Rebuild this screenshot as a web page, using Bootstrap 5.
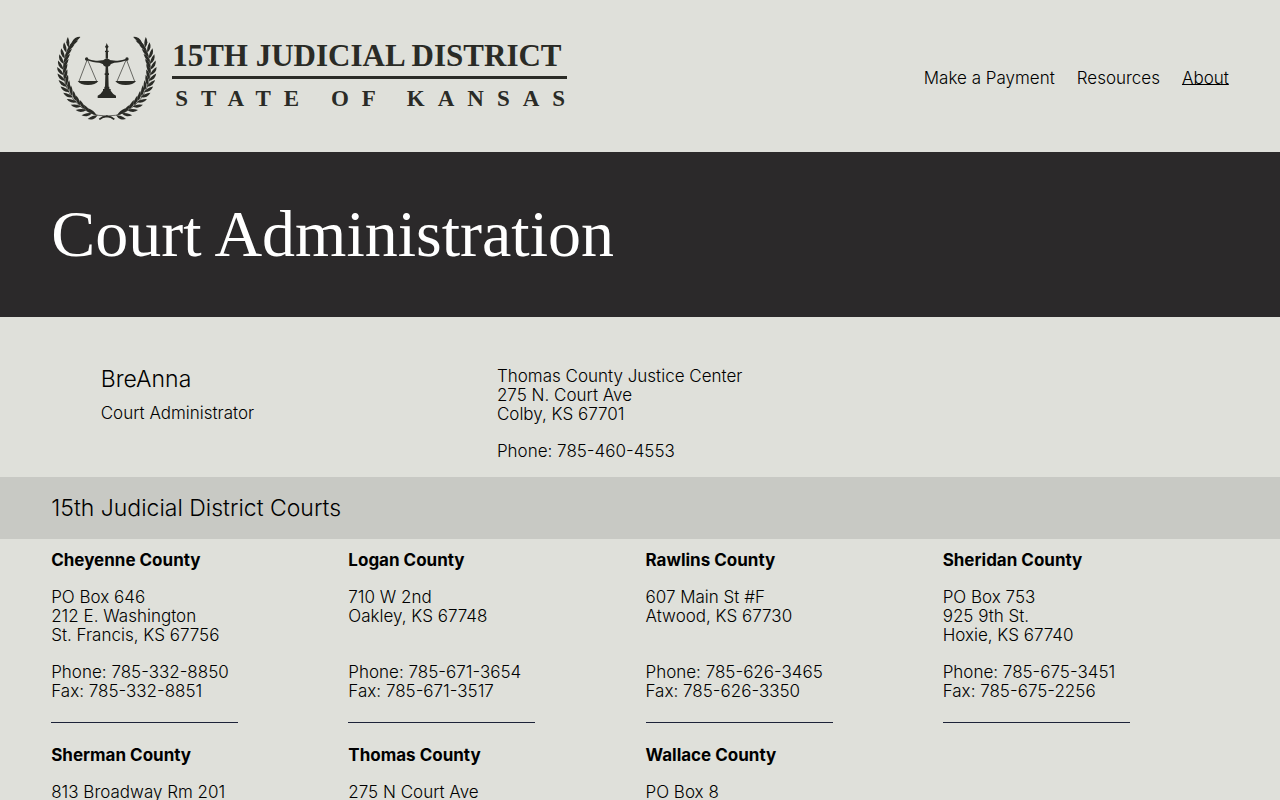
<!DOCTYPE html>
<html lang="en">
<head>
<meta charset="utf-8">
<meta name="viewport" content="width=device-width, initial-scale=1">
<title>Court Administration — 15th Judicial District</title>
<link href="https://cdn.jsdelivr.net/npm/bootstrap@5.3.0/dist/css/bootstrap.min.css" rel="stylesheet">
<style>
  body { background: #dfe0da; color: #000; font-family: Inter, "Liberation Sans", sans-serif; font-weight: 300; font-size: 17px; line-height: 19px; }
  .edge { padding-left: 4vw; padding-right: 4vw; }
  .site-header { min-height: 152px; padding-top: 3px; }
  .brand { color: #2a2b26; gap: 15px; padding-left: 6px; font-family: "Liberation Serif", serif; font-weight: 700; }
  .brand-name { font-size: 31px; line-height: 40px; border-bottom: 3px solid #2a2b26; padding-right: 5px; }
  .brand-state { font-size: 23px; line-height: 40px; letter-spacing: 13px; padding-left: 3px; margin-right: -13px; }
  .site-nav { gap: 22px; }
  .site-nav .nav-link { padding: 0; color: #000; line-height: 24px; }
  .site-nav .active { text-decoration: underline; text-decoration-thickness: 1px; text-underline-offset: 0; text-decoration-skip-ink: none; }
  .hero { background: #2b292a; color: #fff; padding-top: 48px; padding-bottom: 49px; }
  .hero h1 { font-family: "Liberation Serif", serif; font-weight: 400; font-size: 66px; line-height: 68px; }
  .contact-grid { display: grid; grid-template-columns: repeat(24, 1fr); column-gap: 11px; padding-top: 50px; padding-bottom: 16px; }
  .contact-who { grid-column: 2 / span 8; }
  .contact-where { grid-column: 10 / span 12; }
  .section-title { font-size: 23px; line-height: 24px; font-weight: 300; }
  .person { margin-bottom: 13px; }
  .band { background: #c8c9c4; padding-top: 19px; padding-bottom: 19px; }
  .counties { --bs-gutter-x: 11px; padding-top: 12px; row-gap: 23px; }
  .counties h3 { font-size: 17px; line-height: 19px; font-weight: 700; }
  .gap-line { margin-bottom: 18px; }
  .street { min-height: 57px; }
  .rule { width: 187px; margin: 21px 0 0; border-color: #1c2238; opacity: 1; }
</style>
</head>
<body>
<header class="site-header edge d-flex flex-wrap align-items-center justify-content-between">
  <a href="#" class="brand d-flex align-items-center text-decoration-none">
    <svg width="100" height="87" viewBox="36 42 300 261" fill="currentColor" role="img" aria-label="Scales of justice in a laurel wreath">
      <defs>
        <path id="leaf" d="M0 0Q7 -6 17 -6Q26 -5 32 0Q23 3 15 3Q6 3 0 0Z"/>
        <g id="pair"><use href="#leaf" transform="rotate(-30)"/><use href="#leaf" transform="translate(4 0) rotate(30)"/></g>
        <g id="branch">
          <path d="M207 297Q195 287 160 286C105 275 55 220 55 150C55 115 68 80 92 55" fill="none" stroke="currentColor" stroke-width="2"/>
          <path d="M163 298Q174 288 188 289" fill="none" stroke="currentColor" stroke-width="5"/>
          <use href="#pair" transform="translate(158 286) rotate(-170)"/>
          <use href="#pair" transform="translate(141 280) rotate(-160)"/>
          <use href="#pair" transform="translate(124 270) rotate(-150)"/>
          <use href="#pair" transform="translate(109 259) rotate(-142)"/>
          <use href="#pair" transform="translate(96 246) rotate(-134)"/>
          <use href="#pair" transform="translate(84 231) rotate(-127)"/>
          <use href="#pair" transform="translate(74 216) rotate(-119)"/>
          <use href="#pair" transform="translate(66 200) rotate(-112)"/>
          <use href="#pair" transform="translate(60 183) rotate(-105)"/>
          <use href="#pair" transform="translate(56 166) rotate(-98)"/>
          <use href="#pair" transform="translate(55 149) rotate(-90)"/>
          <use href="#pair" transform="translate(56 132) rotate(-84)"/>
          <use href="#pair" transform="translate(59 115) rotate(-79)"/>
          <use href="#pair" transform="translate(64 98) rotate(-72)"/>
          <use href="#pair" transform="translate(71 83) rotate(-64)"/>
          <use href="#leaf" transform="translate(80 69) rotate(-35)"/>
        </g>
        <g id="pan">
          <path d="M127 118L102 184M127 118L155 184" fill="none" stroke="currentColor" stroke-width="2"/>
          <path d="M98 183H160Q152 195 129 195Q106 195 98 183Z"/>
          <circle cx="125" cy="117" r="5"/>
          <path d="M122 115Q145 124 158 122Q170 120 185 120V136Q172 132 163 128Q145 128 122 119Z"/>
        </g>
      </defs>
      <use href="#branch"/>
      <use href="#branch" transform="matrix(-1 0 0 1 371 0)"/>
      <use href="#pan"/>
      <use href="#pan" transform="matrix(-1 0 0 1 371 0)"/>
      <circle cx="185.500" cy="128" r="12"/>
      <path d="M185 69L188 76L191 80L188 85V92H191V96H189V116H182V96H180V92H183V85L180 80L183 76Z"/>
      <path d="M182 138H189L190 160H192V165H190L191 200H193V207H197V212Q203 222 213 227V234H158V227Q168 222 174 212V207H178V200H180L181 165H179V160H181Z"/>
    </svg>
    <span class="d-flex flex-column">
      <span class="brand-name">15TH JUDICIAL DISTRICT</span>
      <span class="brand-state">STATE OF KANSAS</span>
    </span>
  </a>
  <nav class="site-nav nav" aria-label="Main">
    <a class="nav-link" href="#">Make a Payment</a>
    <a class="nav-link" href="#">Resources</a>
    <a class="nav-link active" aria-current="page" href="#">About</a>
  </nav>
</header>
<main>
  <section class="hero edge"><h1 class="mb-0">Court Administration</h1></section>
  <section class="contact-grid edge">
    <div class="contact-who">
      <h2 class="section-title person">BreAnna</h2>
      <p class="mb-0">Court Administrator</p>
    </div>
    <div class="contact-where">
      <p class="gap-line">Thomas County Justice Center<br>275 N. Court Ave<br>Colby, KS 67701</p>
      <p class="mb-0">Phone: 785-460-4553</p>
    </div>
  </section>
  <section>
    <div class="band edge"><h2 class="section-title mb-0">15th Judicial District Courts</h2></div>
    <div class="edge">
      <div class="row row-cols-4 counties">
        <article class="col"><h3 class="gap-line">Cheyenne County</h3><p class="gap-line street">PO Box 646<br>212 E. Washington<br>St. Francis, KS 67756</p><p class="mb-0">Phone: 785-332-8850<br>Fax: 785-332-8851</p><hr class="rule"></article>
        <article class="col"><h3 class="gap-line">Logan County</h3><p class="gap-line street">710 W 2nd<br>Oakley, KS 67748</p><p class="mb-0">Phone: 785-671-3654<br>Fax: 785-671-3517</p><hr class="rule"></article>
        <article class="col"><h3 class="gap-line">Rawlins County</h3><p class="gap-line street">607 Main St #F<br>Atwood, KS 67730</p><p class="mb-0">Phone: 785-626-3465<br>Fax: 785-626-3350</p><hr class="rule"></article>
        <article class="col"><h3 class="gap-line">Sheridan County</h3><p class="gap-line street">PO Box 753<br>925 9th St.<br>Hoxie, KS 67740</p><p class="mb-0">Phone: 785-675-3451<br>Fax: 785-675-2256</p><hr class="rule"></article>
        <article class="col"><h3 class="gap-line">Sherman County</h3><p class="gap-line street">813 Broadway Rm 201</p></article>
        <article class="col"><h3 class="gap-line">Thomas County</h3><p class="gap-line street">275 N Court Ave</p></article>
        <article class="col"><h3 class="gap-line">Wallace County</h3><p class="gap-line street">PO Box 8</p></article>
      </div>
    </div>
  </section>
</main>
<script src="https://cdn.jsdelivr.net/npm/bootstrap@5.3.0/dist/js/bootstrap.bundle.min.js"></script>
</body>
</html>
